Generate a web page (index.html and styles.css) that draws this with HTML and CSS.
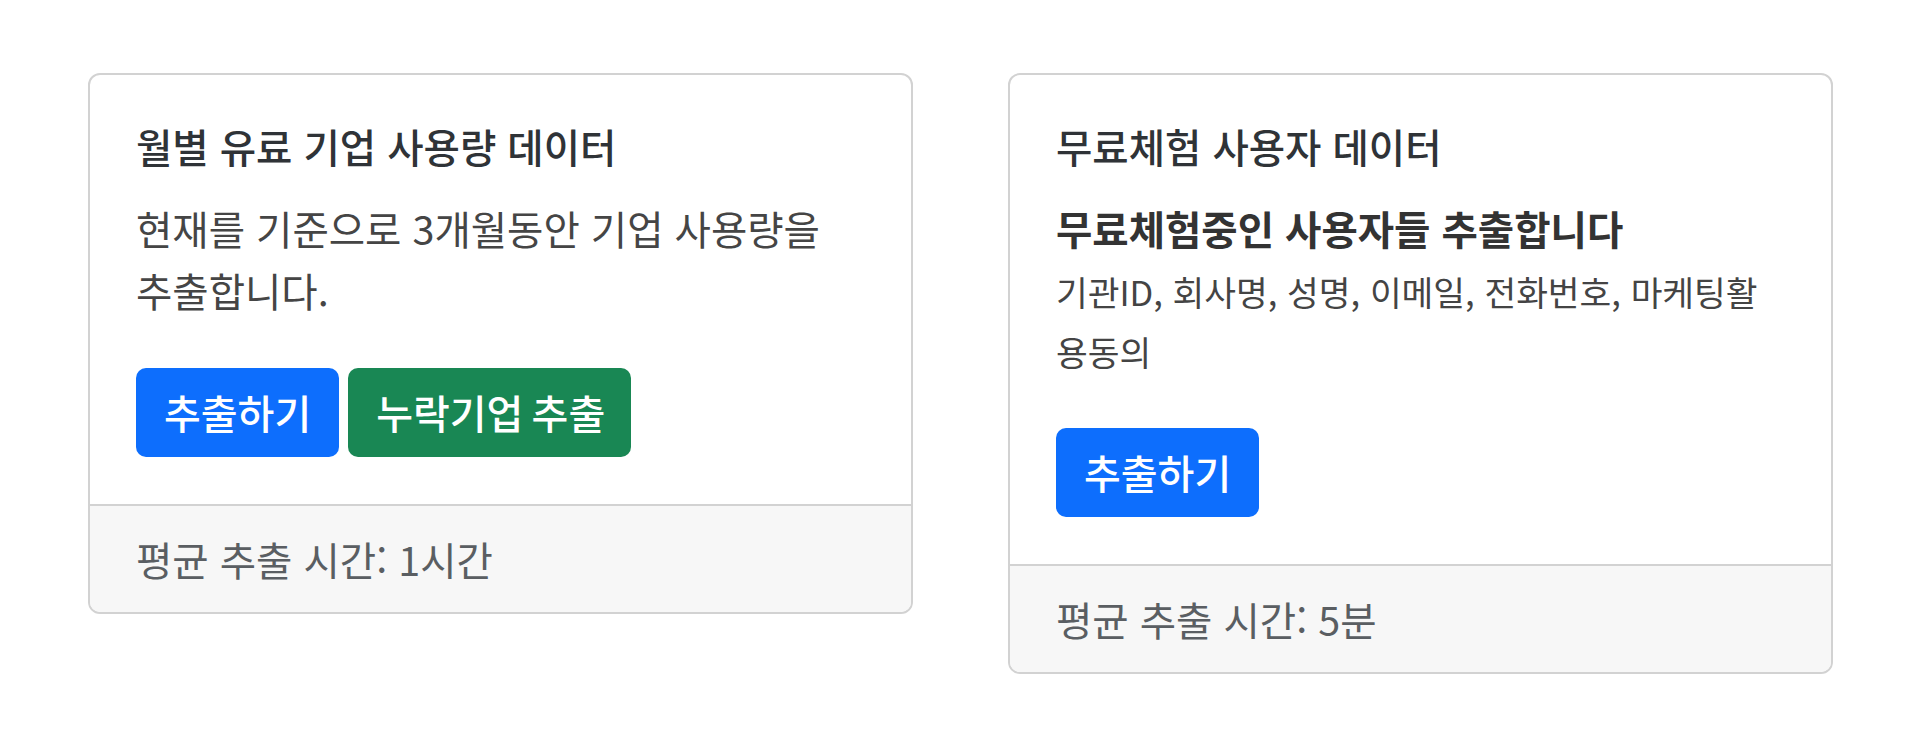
FILE: index.html
```html
<!DOCTYPE html>
<html lang="ko">
<head>
<meta charset="utf-8">
<title>데이터 추출</title>
<link rel="stylesheet" href="styles.css">
</head>
<body>
<div class="wrap">
  <div class="card">
    <div class="card-body">
      <h5 class="card-title">월별 유료 기업 사용량 데이터</h5>
      <p class="card-text">현재를 기준으로 3개월동안 기업 사용량을 추출합니다.</p>
      <div class="btns">
        <button class="btn btn-primary">추출하기</button>
        <button class="btn btn-success">누락기업 추출</button>
      </div>
    </div>
    <div class="card-footer">평균 추출 시간: 1시간</div>
  </div>
  <div class="card">
    <div class="card-body">
      <h5 class="card-title">무료체험 사용자 데이터</h5>
      <p class="card-sub">무료체험중인 사용자들 추출합니다</p>
      <p class="card-small">기관ID, 회사명, 성명, 이메일, 전화번호, 마케팅활용동의</p>
      <div class="btns">
        <button class="btn btn-primary">추출하기</button>
      </div>
    </div>
    <div class="card-footer">평균 추출 시간: 5분</div>
  </div>
</div>
</body>
</html>
```
FILE: styles.css
```css
body {
  margin: 0;
  background: #ffffff;
  font-family: "Noto Sans CJK KR", "Noto Sans", sans-serif;
  color: #333;
}
.wrap {
  display: flex;
  align-items: flex-start;
  gap: 95px;
  padding: 73px 0 0 88px;
}
.card {
  width: 825px;
  box-sizing: border-box;
  border: 2px solid #d2d2d2;
  border-radius: 12px;
  overflow: hidden;
  background: #fff;
}
.card-body {
  padding: 48px 56px 47px 46px;
}
.card-title {
  margin: 0 0 28px;
  font-size: 39.5px;
  font-weight: 500;
  line-height: 46px;
  color: #2f3337;
}
.card-text {
  margin: 0 0 47px;
  font-size: 39.5px;
  line-height: 62px;
  color: #454545;
  word-break: keep-all;
}
.card-sub {
  margin: 0 0 2px;
  font-size: 39.5px;
  font-weight: 700;
  line-height: 62px;
  color: #333;
}
.card-small {
  margin: 0 0 47px;
  font-size: 34.5px;
  line-height: 60px;
  color: #444;
  word-break: break-all;
}
.btns {
  display: flex;
  gap: 9px;
}
.btn {
  font-family: inherit;
  font-size: 40px;
  font-weight: 500;
  line-height: 61px;
  padding: 14px 28px;
  border: 0;
  border-radius: 10px;
  color: #fff;
  word-spacing: -3px;
}
.btn-primary { background: #0d6efd; }
.btn-success { background: #198754; padding-right: 26px; }
.card-footer {
  border-top: 2px solid #d2d2d2;
  background: #f7f7f7;
  padding: 22px 46px;
  font-size: 39.5px;
  line-height: 62px;
  color: #5a5e62;
}
```
